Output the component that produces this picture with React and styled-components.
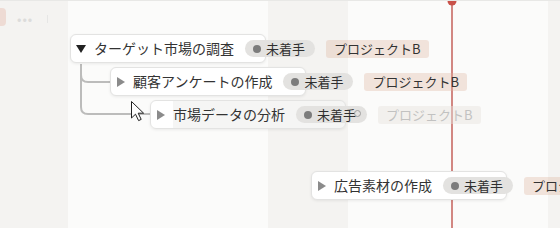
import React from "react";
import styled, { createGlobalStyle } from "styled-components";

const Global = createGlobalStyle`
  html, body { margin: 0; padding: 0; background: #fbfbfa; }
  body { font-family: "Noto Sans CJK JP", "Noto Sans", sans-serif; }
`;

const Canvas = styled.div`
  position: relative;
  width: 560px;
  height: 228px;
  overflow: hidden;
  box-sizing: border-box;
  border-top: 1px solid #e8e8e6;
  background: linear-gradient(
    to right,
    #f4f3f1 0 68px,
    #fbfbfa 68px 268px,
    #f4f3f1 268px 348px,
    #fbfbfa 348px 548px,
    #f4f3f1 548px
  );
`;

const TopStrip = styled.div`
  height: 33px;
  display: flex;
  align-items: flex-start;
`;

const FadedTag = styled.div`
  width: 6px;
  height: 18px;
  margin-top: 7px;
  border-radius: 0 4px 4px 0;
  background: #eedbd4;
`;

const FadedDots = styled.div`
  margin: 8px 0 0 11px;
  font-size: 13px;
  letter-spacing: 1px;
  color: #dcdcdb;
`;

const FadedBar = styled.div`
  width: 1px;
  height: 8px;
  margin: 14px 0 0 14px;
  background: #e6e6e5;
`;

const RowList = styled.div`
  display: flex;
  flex-direction: column;
`;

const Row = styled.div`
  position: relative;
  z-index: 2;
  display: flex;
  align-items: center;
  height: 29px;
  margin-left: ${(p) => p.$x}px;
  margin-top: ${(p) => p.$top}px;
  white-space: nowrap;

  &::before {
    content: "";
    position: absolute;
    left: 0;
    top: 0;
    width: 196px;
    height: 29px;
    box-sizing: border-box;
    z-index: -1;
    border: 1px solid #e3e3e2;
    border-radius: 6px;
    background: ${(p) =>
      p.$ghost
        ? "linear-gradient(to right, #ffffff 0 22px, #f5f5f4 22px)"
        : "#ffffff"};
    box-shadow: 0 1px 3px rgba(0, 0, 0, 0.07);
  }
`;

const Toggle = styled.svg`
  flex: none;
  margin-left: ${(p) => (p.$open ? 6 : 7)}px;
  margin-right: 8px;
`;

const Title = styled.span`
  font-size: 14px;
  line-height: 29px;
  color: #333333;
`;

const Pill = styled.span`
  position: relative;
  display: inline-flex;
  align-items: center;
  gap: 5px;
  height: 17px;
  margin-left: 11px;
  padding: 0 ${(p) => (p.$wide ? 11 : 10)}px 0 8px;
  border-radius: 9px;
  background: #e3e2e0;
  font-size: 13px;
  color: #2f2f2f;
`;

const Dot = styled.span`
  width: 8px;
  height: 8px;
  border-radius: 50%;
  background: #7c7c7c;
`;

const GhostRing = styled.span`
  position: absolute;
  right: 6px;
  top: 4px;
  width: 7px;
  height: 7px;
  border-radius: 50%;
  border: 1.5px solid #9d9d9d;
  box-sizing: border-box;
`;

const Tag = styled.span`
  display: inline-flex;
  align-items: center;
  height: 18px;
  margin-left: 11px;
  padding: 0 8px;
  border-radius: 3px;
  font-size: 13px;
  color: ${(p) => (p.$faded ? "#c2c2c1" : "#333333")};
  background: ${(p) =>
    p.$faded ? "rgba(230, 226, 222, 0.45)" : "rgba(222, 178, 158, 0.33)"};
`;

const Overlay = styled.svg`
  position: absolute;
  left: 0;
  top: 0;
  pointer-events: none;
  z-index: ${(p) => p.$z};
`;

const tasks = [
  { x: 70, top: 0, open: true, title: "ターゲット市場の調査" },
  { x: 110, top: 4, title: "顧客アンケートの作成" },
  { x: 150, top: 4, title: "市場データの分析", ghost: true },
  { x: 311, top: 42, title: "広告素材の作成" },
];

function Caret({ open }) {
  return open ? (
    <Toggle $open width="10" height="8" viewBox="0 0 10 8">
      <path d="M0 0 H10 L5 8 Z" fill="#222222" />
    </Toggle>
  ) : (
    <Toggle width="8" height="10" viewBox="0 0 8 10">
      <path d="M0 0 L8 5 L0 10 Z" fill="#8b8b8b" />
    </Toggle>
  );
}

export default function App() {
  return (
    <>
      <Global />
      <Canvas>
        <Overlay $z={1} width="560" height="228" viewBox="0 0 560 228">
          <line x1="452" y1="0" x2="452" y2="228" stroke="#c5615a" strokeWidth="1.5" />
          <circle cx="452" cy="0" r="4.5" fill="#c9524a" />
          <path
            d="M81 63 V74 Q81 81 88 81 H111 M81 74 V106 Q81 113 88 113 H151"
            fill="none"
            stroke="#bcbcbb"
            strokeWidth="2"
          />
        </Overlay>
        <TopStrip>
          <FadedTag />
          <FadedDots>•••</FadedDots>
          <FadedBar />
        </TopStrip>
        <RowList>
          {tasks.map((t) => (
            <Row key={t.title} $x={t.x} $top={t.top} $ghost={t.ghost}>
              <Caret open={t.open} />
              <Title>{t.title}</Title>
              <Pill $wide={t.ghost}>
                <Dot />
                未着手
                {t.ghost && <GhostRing />}
              </Pill>
              <Tag $faded={t.ghost}>プロジェクトB</Tag>
            </Row>
          ))}
        </RowList>
        <Overlay $z={3} width="560" height="228" viewBox="0 0 560 228">
          <path
            d="M131.5 100.5 V117 L135.5 113.2 L138.6 119.6 L141.2 118.4 L138.2 112.2 L143.6 112.2 Z"
            fill="#ffffff"
            stroke="#222222"
            strokeWidth="1"
            strokeLinejoin="round"
          />
        </Overlay>
      </Canvas>
    </>
  );
}
